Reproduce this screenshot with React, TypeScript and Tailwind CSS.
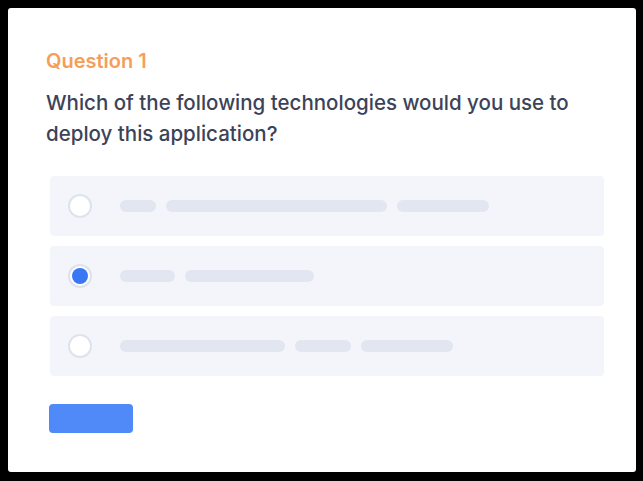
export default function App() {
  const options = [
    { selected: false, bars: [36, 221, 92] },
    { selected: true, bars: [55, 129] },
    { selected: false, bars: [165, 56, 92] },
  ]

  return (
    <div className="w-[643px] h-[481px] bg-black p-[8px] font-['Inter',sans-serif]">
      <div className="w-[628px] h-[464px] bg-white rounded-[3px] pl-[38px] pt-[41px]">
        <h3 className="text-[20px] leading-[24px] font-semibold text-[#f59e5a]">Question 1</h3>
        <p className="mt-[14px] w-[550px] text-[20.5px] leading-[31px] font-medium text-[#3c4358]">
          Which of the following technologies would you use to deploy this application?
        </p>
        <div className="mt-[27px] ml-[4px] w-[554px] flex flex-col gap-[10px]">
          {options.map((o, i) => (
            <div key={i} className="h-[60px] rounded-[4px] bg-[#f3f5fb] flex items-center pl-[18px]">
              <div className="w-[24px] h-[24px] rounded-full bg-white border-2 border-[#dde3ee] flex items-center justify-center">
                {o.selected && <div className="w-[16px] h-[16px] rounded-full bg-[#3a77f5]" />}
              </div>
              <div className="ml-[28px] flex gap-[10px]">
                {o.bars.map((w, j) => (
                  <div key={j} className="h-[12px] rounded-full bg-[#e1e6f0]" style={{ width: w }} />
                ))}
              </div>
            </div>
          ))}
        </div>
        <button className="mt-[28px] ml-[3px] w-[84px] h-[29px] rounded-[4px] bg-[#5089f8]" />
      </div>
    </div>
  )
}
